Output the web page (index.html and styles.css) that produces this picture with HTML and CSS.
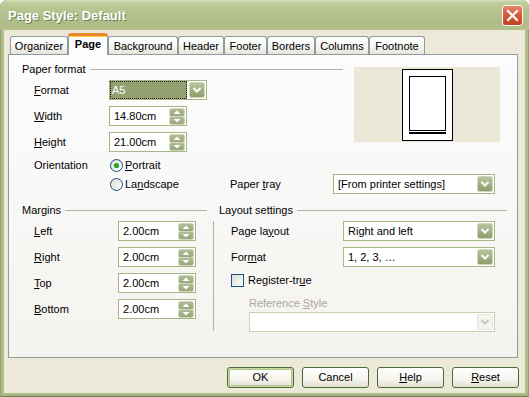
FILE: index.html
```html
<!DOCTYPE html>
<html>
<head>
<meta charset="utf-8">
<title>Page Style: Default</title>
<link rel="stylesheet" href="styles.css">
</head>
<body>
<svg class="defs" width="0" height="0" aria-hidden="true">
  <defs>
    <linearGradient id="gdd" x1="0" y1="0" x2="0" y2="1">
      <stop offset="0" stop-color="#B9C59E"/>
      <stop offset="1" stop-color="#8E9C6B"/>
    </linearGradient>
    <linearGradient id="gsp" x1="0" y1="0" x2="0" y2="1">
      <stop offset="0" stop-color="#B3BE97"/>
      <stop offset="1" stop-color="#98A47A"/>
    </linearGradient>
    <linearGradient id="grd" x1="0" y1="0" x2="1" y2="1">
      <stop offset="0" stop-color="#DCDCD4"/>
      <stop offset="1" stop-color="#FFFFFF"/>
    </linearGradient>
    <linearGradient id="gcl" x1="0" y1="0" x2="0" y2="1">
      <stop offset="0" stop-color="#E88A6A"/>
      <stop offset="0.5" stop-color="#D5583A"/>
      <stop offset="1" stop-color="#C2421F"/>
    </linearGradient>
  </defs>
</svg>
<div class="window">
  <div class="titlebar">
    <span class="title">Page Style: Default</span>
    <svg class="close" width="21" height="21" viewBox="0 0 21 21">
      <rect x="0.5" y="0.5" width="20" height="20" rx="3" fill="url(#gcl)" stroke="#FFFFFF"/>
      <path d="M6 6 L15 15 M15 6 L6 15" stroke="#FFFFFF" stroke-width="2.2" stroke-linecap="square"/>
    </svg>
  </div>
  <div class="client">
    <div class="tabs">
      <div class="tab t-org">Organizer</div>
      <div class="tab sel t-page">Page</div>
      <div class="tab t-bg">Background</div>
      <div class="tab t-hd">Header</div>
      <div class="tab t-ft">Footer</div>
      <div class="tab t-bd">Borders</div>
      <div class="tab t-col">Columns</div>
      <div class="tab t-fn">Footnote</div>
    </div>
    <div class="pane">
      <div class="top">
        <div class="paper">
          <div class="ghead"><span>Paper format</span><i class="hline"></i></div>
          <div class="row first">
            <span class="lbl"><u>F</u>ormat</span>
            <div class="combo focus w-fmt">
              <span class="hl">A5</span>
              <svg class="dd" width="16" height="16" viewBox="0 0 16 16"><rect x="0.5" y="0.5" width="15" height="15" rx="2" fill="url(#gdd)" stroke="#CED6B8"/><path d="M4.5 6 L8 9.5 L11.5 6" fill="none" stroke="#FFFFFF" stroke-width="2"/></svg>
            </div>
          </div>
          <div class="row">
            <span class="lbl"><u>W</u>idth</span>
            <div class="field w-num">
              <span class="val">14.80cm</span>
              <svg class="spin" width="16" height="17" viewBox="0 0 16 17"><rect x="0.5" y="0.5" width="15" height="8" rx="2" fill="url(#gsp)" stroke="#D0D7BC"/><rect x="0.5" y="8.5" width="15" height="8" rx="2" fill="url(#gsp)" stroke="#D0D7BC"/><path d="M4.5 6 L8 2.5 L11.5 6 Z" fill="#FFFFFF"/><path d="M4.5 11 L8 14.5 L11.5 11 Z" fill="#FFFFFF"/></svg>
            </div>
          </div>
          <div class="row">
            <span class="lbl"><u>H</u>eight</span>
            <div class="field w-num">
              <span class="val">21.00cm</span>
              <svg class="spin" width="16" height="17" viewBox="0 0 16 17"><rect x="0.5" y="0.5" width="15" height="8" rx="2" fill="url(#gsp)" stroke="#D0D7BC"/><rect x="0.5" y="8.5" width="15" height="8" rx="2" fill="url(#gsp)" stroke="#D0D7BC"/><path d="M4.5 6 L8 2.5 L11.5 6 Z" fill="#FFFFFF"/><path d="M4.5 11 L8 14.5 L11.5 11 Z" fill="#FFFFFF"/></svg>
            </div>
          </div>
          <div class="row orient">
            <span class="lbl">Orientation</span>
            <span class="radio">
              <svg width="13" height="13" viewBox="0 0 13 13"><circle cx="6.5" cy="6.5" r="6" fill="url(#grd)" stroke="#1C5180"/><circle cx="6.5" cy="6.5" r="2.6" fill="#2EA32E"/></svg>
              <span><u>P</u>ortrait</span>
            </span>
          </div>
        </div>
        <svg class="preview" width="146" height="75" viewBox="0 0 146 75">
          <rect x="0" y="0" width="146" height="75" fill="#EBE8D8"/>
          <rect x="48.5" y="2.5" width="50" height="71" fill="#FFFFFF" stroke="#000000"/>
          <rect x="55.5" y="9.5" width="36" height="54" fill="#FFFFFF" stroke="#000000"/>
          <rect x="55" y="65" width="37" height="2" fill="#000000"/>
        </svg>
      </div>
      <div class="row land">
        <span class="lbl"></span>
        <span class="radio rgroup">
          <svg width="13" height="13" viewBox="0 0 13 13"><circle cx="6.5" cy="6.5" r="6" fill="url(#grd)" stroke="#1C5180"/></svg>
          <span>La<u>n</u>dscape</span>
        </span>
        <span class="lbl tray">Paper <u>t</u>ray</span>
        <div class="combo w-tray">
          <span class="val">[From printer settings]</span>
          <svg class="dd" width="16" height="16" viewBox="0 0 16 16"><rect x="0.5" y="0.5" width="15" height="15" rx="2" fill="url(#gdd)" stroke="#CED6B8"/><path d="M4.5 6 L8 9.5 L11.5 6" fill="none" stroke="#FFFFFF" stroke-width="2"/></svg>
        </div>
      </div>

      <div class="bottom">
        <div class="bhead">
          <div class="ghead g-m"><span>Margins</span><i class="hline"></i></div>
          <div class="ghead g-l"><span>Layout settings</span><i class="hline"></i></div>
        </div>
        <div class="bbody">
          <div class="mcol">
            <div class="row mrow first">
              <span class="lbl"><u>L</u>eft</span>
              <div class="field w-num">
                <span class="val">2.00cm</span>
                <svg class="spin" width="16" height="17" viewBox="0 0 16 17"><rect x="0.5" y="0.5" width="15" height="8" rx="2" fill="url(#gsp)" stroke="#D0D7BC"/><rect x="0.5" y="8.5" width="15" height="8" rx="2" fill="url(#gsp)" stroke="#D0D7BC"/><path d="M4.5 6 L8 2.5 L11.5 6 Z" fill="#FFFFFF"/><path d="M4.5 11 L8 14.5 L11.5 11 Z" fill="#FFFFFF"/></svg>
              </div>
            </div>
            <div class="row mrow">
              <span class="lbl"><u>R</u>ight</span>
              <div class="field w-num">
                <span class="val">2.00cm</span>
                <svg class="spin" width="16" height="17" viewBox="0 0 16 17"><rect x="0.5" y="0.5" width="15" height="8" rx="2" fill="url(#gsp)" stroke="#D0D7BC"/><rect x="0.5" y="8.5" width="15" height="8" rx="2" fill="url(#gsp)" stroke="#D0D7BC"/><path d="M4.5 6 L8 2.5 L11.5 6 Z" fill="#FFFFFF"/><path d="M4.5 11 L8 14.5 L11.5 11 Z" fill="#FFFFFF"/></svg>
              </div>
            </div>
            <div class="row mrow">
              <span class="lbl"><u>T</u>op</span>
              <div class="field w-num">
                <span class="val">2.00cm</span>
                <svg class="spin" width="16" height="17" viewBox="0 0 16 17"><rect x="0.5" y="0.5" width="15" height="8" rx="2" fill="url(#gsp)" stroke="#D0D7BC"/><rect x="0.5" y="8.5" width="15" height="8" rx="2" fill="url(#gsp)" stroke="#D0D7BC"/><path d="M4.5 6 L8 2.5 L11.5 6 Z" fill="#FFFFFF"/><path d="M4.5 11 L8 14.5 L11.5 11 Z" fill="#FFFFFF"/></svg>
              </div>
            </div>
            <div class="row mrow">
              <span class="lbl"><u>B</u>ottom</span>
              <div class="field w-num">
                <span class="val">2.00cm</span>
                <svg class="spin" width="16" height="17" viewBox="0 0 16 17"><rect x="0.5" y="0.5" width="15" height="8" rx="2" fill="url(#gsp)" stroke="#D0D7BC"/><rect x="0.5" y="8.5" width="15" height="8" rx="2" fill="url(#gsp)" stroke="#D0D7BC"/><path d="M4.5 6 L8 2.5 L11.5 6 Z" fill="#FFFFFF"/><path d="M4.5 11 L8 14.5 L11.5 11 Z" fill="#FFFFFF"/></svg>
              </div>
            </div>
          </div>
          <div class="vsep"></div>
          <div class="lcol">
            <div class="row first">
              <span class="lbl l-lay">Page la<u>y</u>out</span>
              <div class="combo w-lay">
                <span class="val">Right and left</span>
                <svg class="dd" width="16" height="16" viewBox="0 0 16 16"><rect x="0.5" y="0.5" width="15" height="15" rx="2" fill="url(#gdd)" stroke="#CED6B8"/><path d="M4.5 6 L8 9.5 L11.5 6" fill="none" stroke="#FFFFFF" stroke-width="2"/></svg>
              </div>
            </div>
            <div class="row">
              <span class="lbl l-lay">For<u>m</u>at</span>
              <div class="combo w-lay">
                <span class="val">1, 2, 3, …</span>
                <svg class="dd" width="16" height="16" viewBox="0 0 16 16"><rect x="0.5" y="0.5" width="15" height="15" rx="2" fill="url(#gdd)" stroke="#CED6B8"/><path d="M4.5 6 L8 9.5 L11.5 6" fill="none" stroke="#FFFFFF" stroke-width="2"/></svg>
              </div>
            </div>
            <div class="check">
              <svg width="13" height="13" viewBox="0 0 13 13"><rect x="0.5" y="0.5" width="12" height="12" fill="url(#grd)" stroke="#1C5180"/></svg>
              <span>Register-tr<u>u</u>e</span>
            </div>
            <div class="reflbl">Reference <u>S</u>tyle</div>
            <div class="combo disabled w-ref">
              <span class="val"></span>
              <svg class="dd" width="16" height="16" viewBox="0 0 16 16"><rect x="0.5" y="0.5" width="15" height="15" rx="2" fill="#F4F4EF" stroke="#E6E6DF"/><path d="M4.5 6 L8 9.5 L11.5 6" fill="none" stroke="#C8C8BE" stroke-width="2"/></svg>
            </div>
          </div>
        </div>
      </div>
    </div>
    <div class="buttons">
      <div class="btn def">OK</div>
      <div class="btn">Cancel</div>
      <div class="btn"><span><u>H</u>elp</span></div>
      <div class="btn"><span><u>R</u>eset</span></div>
    </div>
  </div>
</div>
</body>
</html>
```
FILE: styles.css
```css
* { box-sizing: border-box; }
html, body { margin: 0; padding: 0; background: #FFFFFF; }
body {
  font-family: "Liberation Sans", Arial, sans-serif;
  font-size: 11px;
  line-height: 13px;
  color: #000000;
}
u { text-decoration: underline; text-underline-offset: 1px; }
.defs { position: absolute; width: 0; height: 0; overflow: hidden; }

.window {
  width: 529px;
  height: 397px;
  display: flex;
  flex-direction: column;
  background: #AEBD8B;
  border-radius: 7px 7px 0 0;
  box-shadow: inset 1px 0 #8FA26C, inset -1px 0 #8FA26C, inset 0 -1px #6E854F, inset 0 -2px #9CAF79;
}
.titlebar {
  height: 30px;
  flex: none;
  display: flex;
  align-items: center;
  justify-content: space-between;
  padding: 0 6px 0 8px;
  border-radius: 7px 7px 0 0;
  background: linear-gradient(#DCE3C2 0, #C3CE9F 2px, #B8C592 30%, #AFBC88 75%, #B4C18D 100%);
}
.title {
  font-family: "Liberation Sans", Arial, sans-serif;
  font-weight: bold;
  font-size: 13px;
  color: #FFFFFF;
  text-shadow: 1px 1px 0 #72814F;
  padding-top: 1px;
}
.close { display: block; }

.client {
  flex: 1;
  display: flex;
  flex-direction: column;
  margin: 0 4px 4px 4px;
  padding-left: 4px;
  background: #ECE9D8;
}

/* tabs */
.tabs {
  height: 25px;
  display: flex;
  align-items: flex-end;
  padding-left: 2px;
  margin-bottom: -1px;
  position: relative;
  z-index: 1;
}
.tab {
  height: 18px;
  margin-bottom: 1px;
  border: 1px solid #919B9C;
  border-bottom: none;
  border-radius: 3px 3px 0 0;
  background: linear-gradient(#FFFFFF, #F7F7F4 50%, #E6E5DD);
  text-align: center;
  padding-top: 3px;
}
.tab.sel {
  height: 22px;
  margin-bottom: 0;
  border-top: 3px solid #E68B2C;
  box-shadow: inset 0 1px #FFC73C;
  background: #FCFCFE;
  font-weight: bold;
  padding-top: 2px;
}
.t-org { width: 58px; }
.t-page { width: 40px; }
.t-bg { width: 70px; }
.t-hd { width: 46px; }
.t-ft { width: 43px; }
.t-bd { width: 48px; }
.t-col { width: 54px; }
.t-fn { width: 56px; }

/* pane */
.pane {
  width: 510px;
  height: 304px;
  flex: none;
  border: 1px solid #919B9C;
  background: linear-gradient(#FCFCFE, #F4F3EE);
  padding: 8px 0 0 13px;
}
.top { display: flex; }
.paper { width: 321px; }
.preview { display: block; margin: 4px 0 0 11px; }

.ghead { display: flex; align-items: center; height: 13px; }
.hline { flex: 1; height: 1px; background: #B6B4A6; margin-left: 4px; }

.row { display: flex; align-items: center; height: 20px; margin-top: 6px; padding-left: 12px; }
.row.first { margin-top: 4px; }
.lbl { width: 75px; flex: none; }
.row.orient { height: 16px; margin-top: 5px; }
.row.land { margin-top: 1px; }

.radio { display: flex; align-items: center; margin-left: 1px; }
.radio svg { display: block; margin-right: 2px; }
.rgroup { width: 120px; }
.lbl.tray { width: 103px; }

.field, .combo {
  height: 20px;
  border: 1px solid #A5B883;
  background: #FFFFFF;
  display: flex;
  align-items: center;
  padding: 0 1px 0 4px;
  flex: none;
}
.val { flex: 1; white-space: nowrap; }
.spin, .dd { display: block; flex: none; }
.w-num { width: 78px; }
.w-fmt { width: 98px; }
.w-tray { width: 162px; }
.w-lay { width: 152px; }
.w-ref { width: 246px; }

.combo.focus { padding: 0 1px 0 0; }
.hl {
  flex: 1;
  align-self: stretch;
  margin: 0 2px 0 0;
  background: #949F70;
  color: #FFFFFF;
  border: 1px dotted #1A1A1A;
  padding-left: 1px;
  display: flex;
  align-items: center;
}
.combo.disabled { border-color: #C8D1B3; }

/* bottom */
.bottom { margin-top: 10px; }
.bhead { display: flex; }
.g-m { width: 185px; }
.g-l { width: 288px; margin-left: 12px; }
.bbody { display: flex; margin-top: 0; }
.mcol { width: 185px; flex: none; }
.mrow { padding-left: 12px; }
.mrow .lbl { width: 84px; }
.vsep { width: 1px; height: 110px; margin: 4px 0 0 6px; background: #B6B4A6; flex: none; }
.lcol { margin-left: 17px; width: 264px; }
.lcol .row { padding-left: 0; }
.l-lay { width: 112px; }
.check { display: flex; align-items: center; height: 13px; margin-top: 7px; }
.check svg { display: block; margin-right: 4px; }
.reflbl { margin: 10px 0 0 18px; color: #ACA899; height: 13px; }
.combo.disabled { margin: 2px 0 0 18px; }

/* buttons */
.buttons {
  display: flex;
  justify-content: flex-end;
  gap: 8px;
  margin-top: 9px;
  padding-right: 6px;
}
.btn {
  width: 67px;
  height: 21px;
  border: 1px solid #4A6A37;
  border-radius: 3px;
  background: linear-gradient(#FFFFFF, #F6F5EE 60%, #E2DFD2);
  display: flex;
  align-items: center;
  justify-content: center;
}
.btn.def { box-shadow: inset 0 0 0 1px #C8DBA5, inset 0 0 0 2px #B0C88A; }
```
